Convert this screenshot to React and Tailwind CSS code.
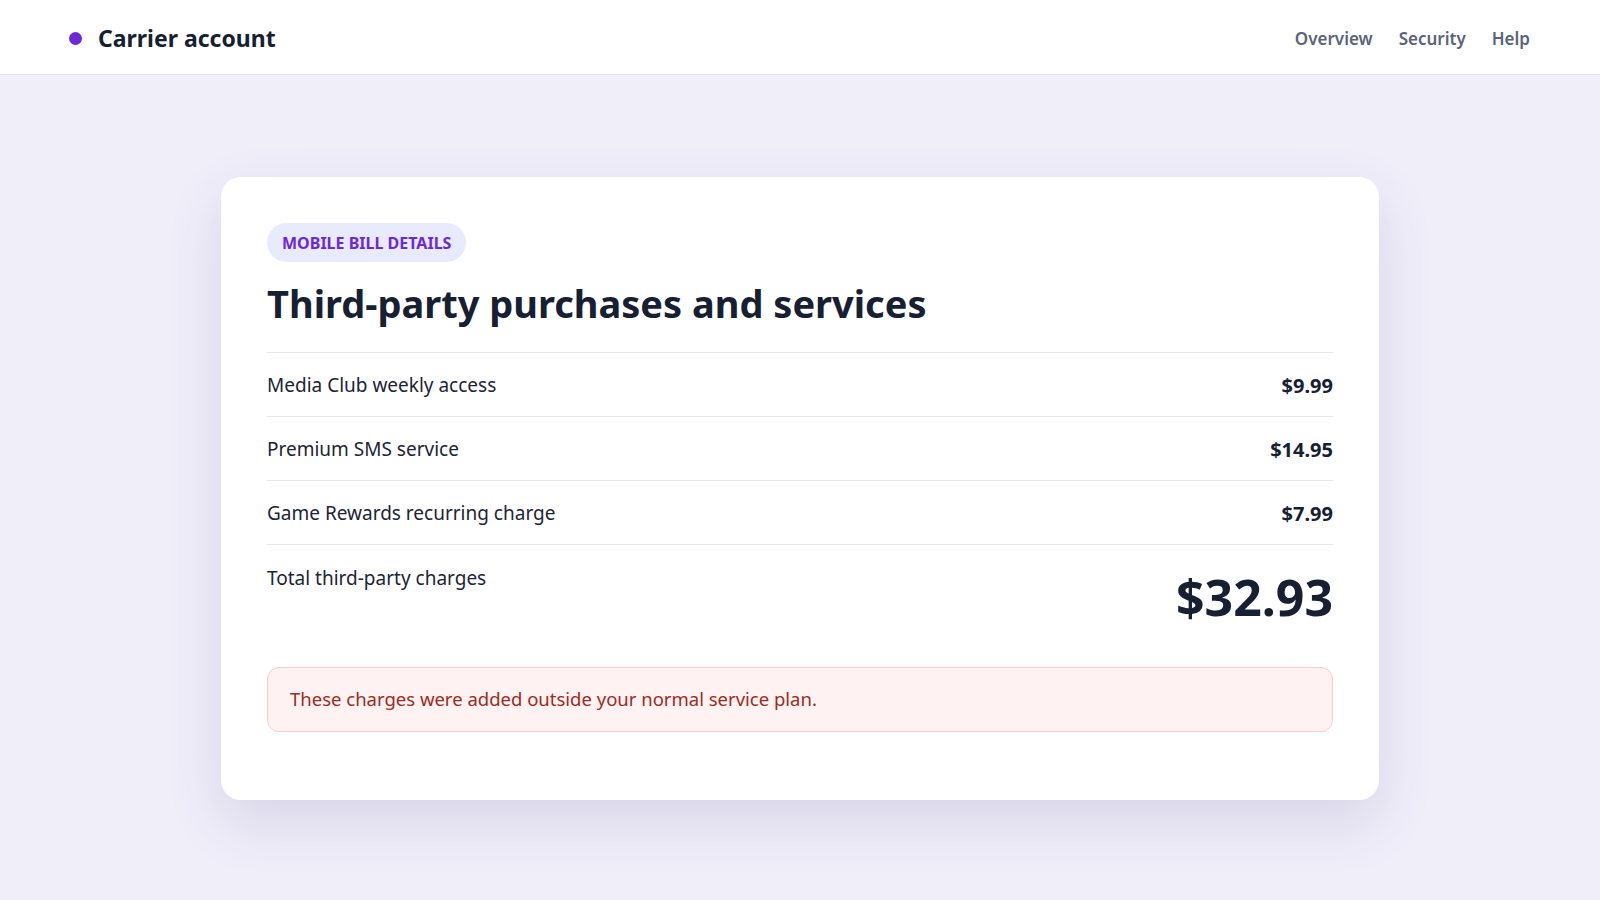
const items = [
  { name: 'Media Club weekly access', amount: '$9.99' },
  { name: 'Premium SMS service', amount: '$14.95' },
  { name: 'Game Rewards recurring charge', amount: '$7.99' },
]

const App = () => {
  return (
    <div
      className="min-h-screen bg-[#f0eef9] text-[#172033]"
      style={{ fontFamily: '"Noto Sans", "Open Sans", sans-serif' }}
    >
      <header className="h-[75px] pt-[3px] bg-white border-b border-[#e4e2ef] flex items-center justify-between pl-[69px] pr-[70px]">
        <div className="flex items-center gap-[16px]">
          <span className="w-[13px] h-[13px] rounded-full bg-[#6d28d9]" />
          <span className="text-[23px] font-bold text-[#172033]">Carrier account</span>
        </div>
        <nav className="flex items-center gap-[26px] text-[17px] font-semibold text-[#5b6479]">
          <a>Overview</a>
          <a>Security</a>
          <a>Help</a>
        </nav>
      </header>

      <main className="pt-[102px] pb-[100px]">
        <div className="mx-auto w-[1158px] bg-white rounded-[20px] shadow-[0_22px_55px_rgba(70,66,130,0.14)] px-[46px] pt-[46px] pb-[68px]">
          <div className="inline-flex items-center h-[39px] px-[15px] rounded-full bg-[#e7ebfd] text-[#6d28d9] text-[16px] font-bold uppercase">
            Mobile bill details
          </div>
          <h1 className="mt-[19px] text-[38px] leading-[1.2] font-bold text-[#172033]">
            Third-party purchases and services
          </h1>

          <div className="mt-[25px] border-t border-[#e5e7eb]">
            {items.map((item) => (
              <div
                key={item.name}
                className="flex items-center justify-between pt-[19px] pb-[17px] border-b border-[#e5e7eb] text-[19px] leading-[27px]"
              >
                <span className="text-[#1c2436]">{item.name}</span>
                <span className="text-[20px] font-bold text-[#172033]">{item.amount}</span>
              </div>
            ))}
            <div className="flex items-start justify-between pt-[20px]">
              <span className="text-[19px] leading-[27px] text-[#1c2436]">Total third-party charges</span>
              <span className="mt-[7px] text-[50px] leading-none font-bold text-[#172033]">$32.93</span>
            </div>
          </div>

          <div className="mt-[45px] rounded-[12px] border border-[#fecaca] bg-[#fef2f2] px-[22px] py-[18.5px] text-[18.5px] leading-[26px] text-[#9b2c22]">
            These charges were added outside your normal service plan.
          </div>
        </div>
      </main>
    </div>
  )
}

export default App
